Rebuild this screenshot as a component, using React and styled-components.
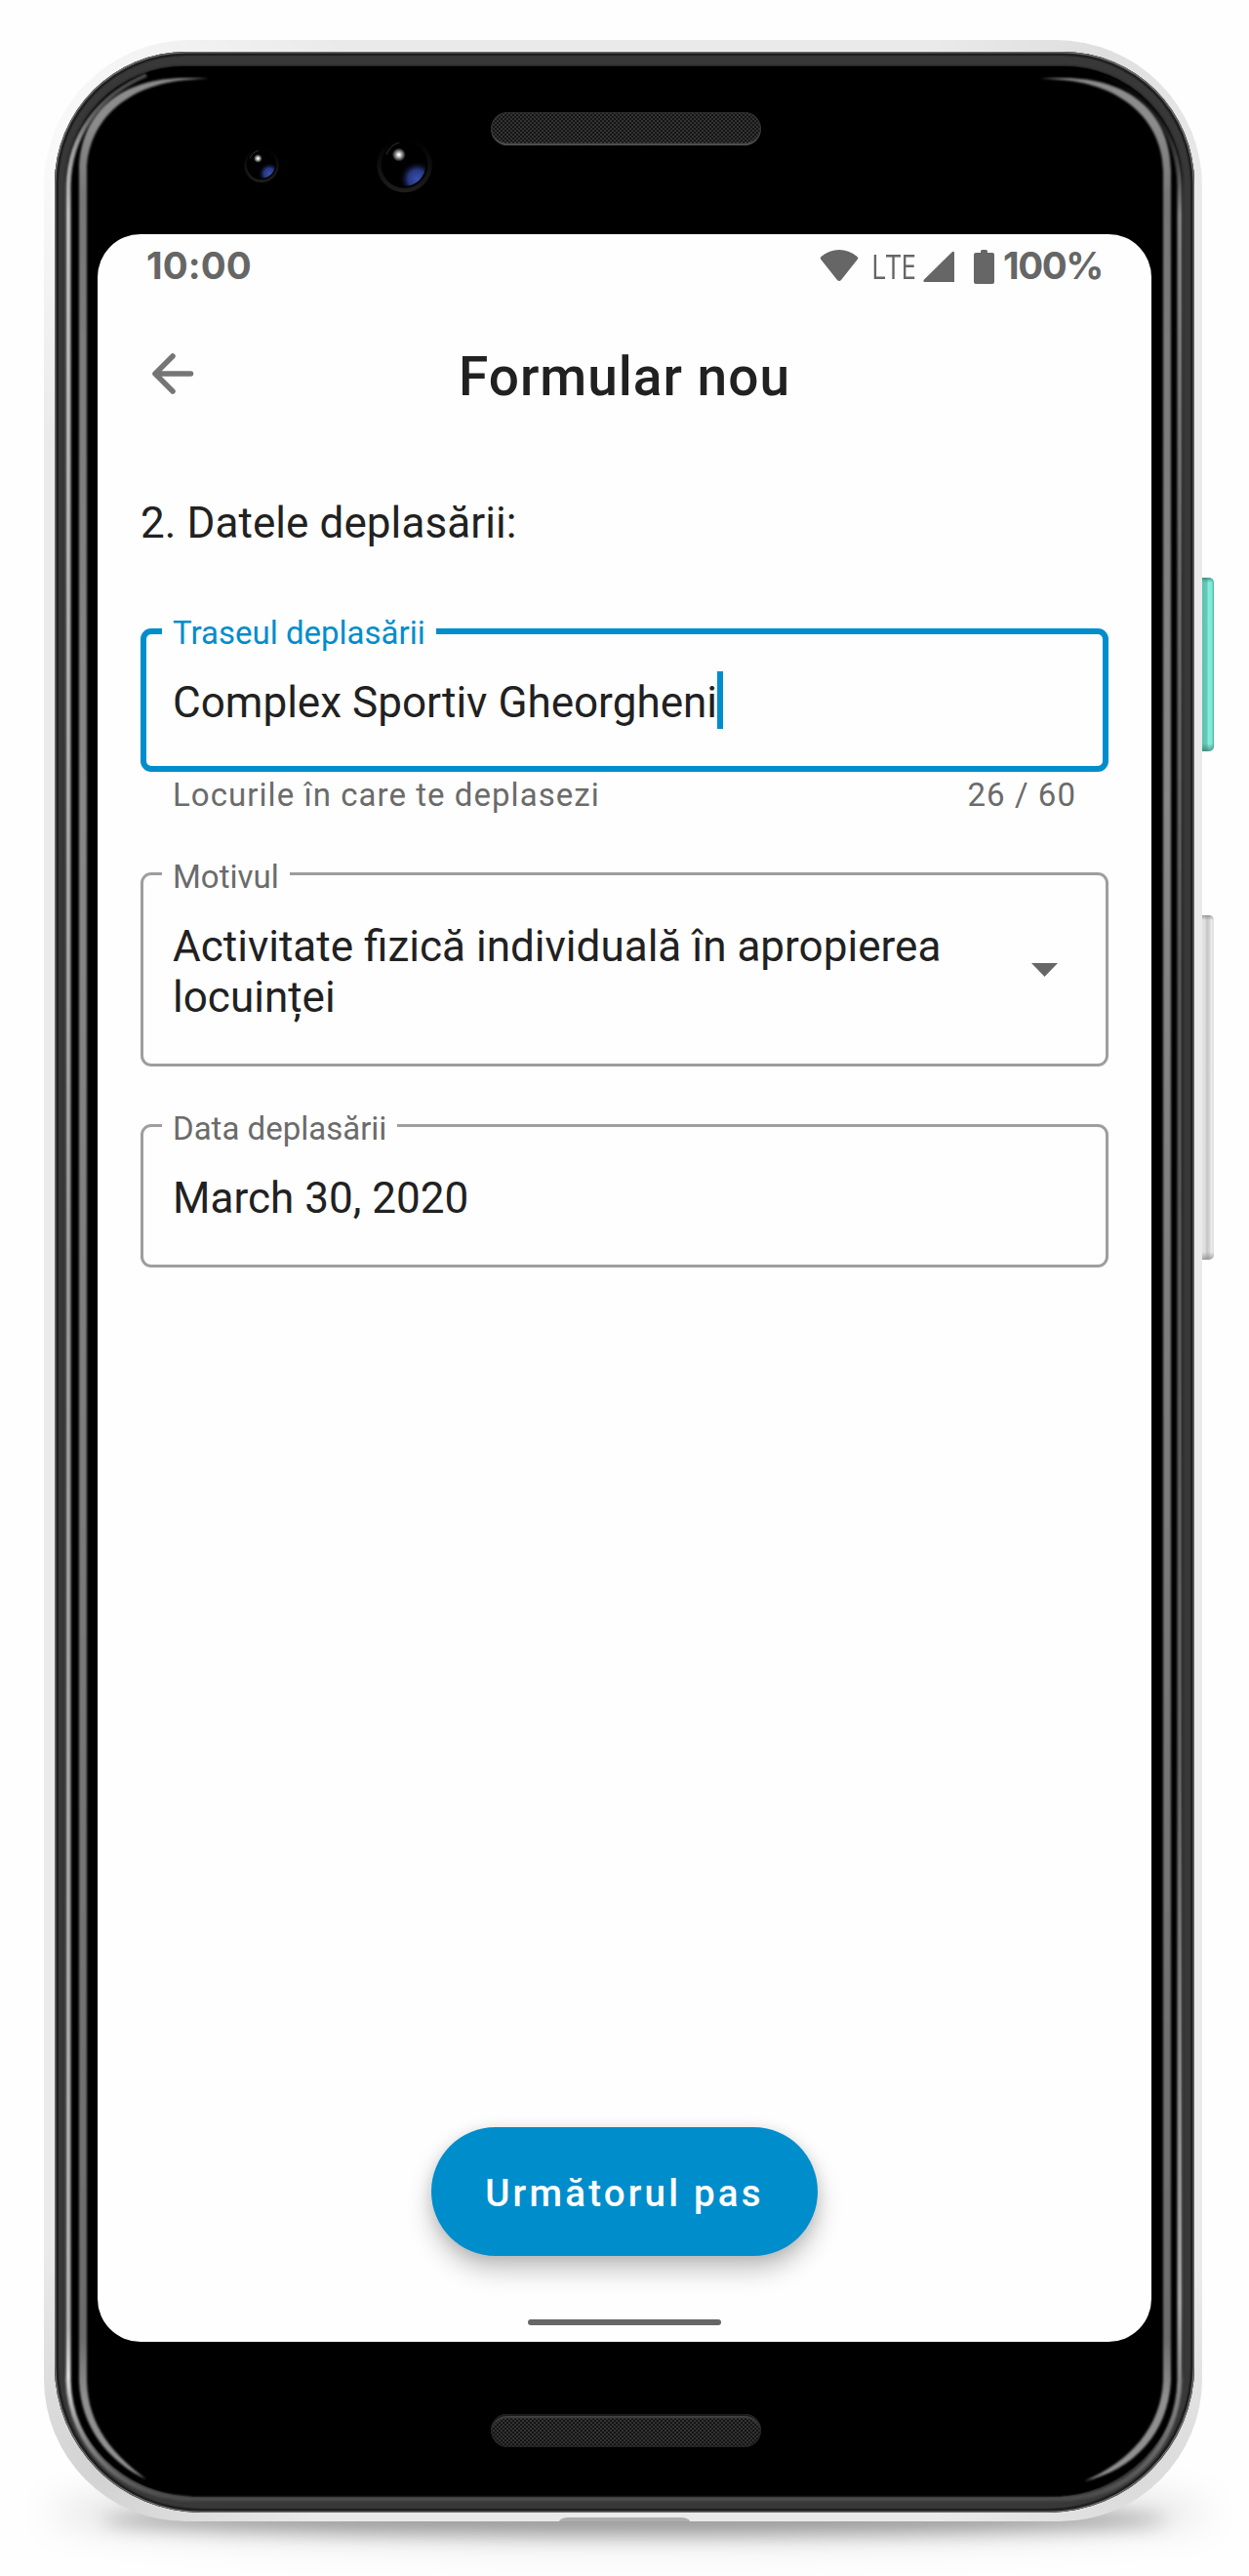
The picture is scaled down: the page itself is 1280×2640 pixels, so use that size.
import React from "react";
import styled, { createGlobalStyle } from "styled-components";

const GlobalStyle = createGlobalStyle`
  *, *::before, *::after { box-sizing: border-box; }
  body { margin: 0; background: #fefefe; }
`;

const Stage = styled.main`
  position: relative;
  width: 1280px;
  height: 2640px;
  padding: 41px 0 0 45px;
  overflow: hidden;
  background: #fefefe;
  font-family: Roboto, "Liberation Sans", sans-serif;
  color: #212121;
`;

const GroundShadow = styled.div`
  position: absolute;
  left: ${(p) => p.$left}px;
  top: ${(p) => p.$top}px;
  width: ${(p) => p.$width}px;
  height: ${(p) => p.$height}px;
  border-radius: 50%;
  background: rgba(0, 0, 0, ${(p) => p.$alpha});
  filter: blur(${(p) => p.$blur}px);
`;

const SideKey = styled.div`
  position: absolute;
  left: 1230px;
  top: ${(p) => p.$top}px;
  width: 14px;
  height: ${(p) => p.$height}px;
  border-radius: 0 5px 5px 0;
  background:
    linear-gradient(${(p) => p.$edge} 0, transparent 5px, transparent calc(100% - 8px), ${(p) => p.$edge} 100%),
    ${(p) => p.$fill};
`;

const Shell = styled.div`
  position: relative;
  width: 1187px;
  height: 2543px;
  padding: 12px 8px 8px 11px;
  border-radius: 150px 150px 146px 146px;
  background:
    radial-gradient(circle at 60px 2490px, #d2d2d2 0, rgba(220, 220, 220, 0) 230px),
    radial-gradient(circle at 1120px 2490px, #dadada 0, rgba(225, 225, 225, 0) 210px),
    radial-gradient(circle at 1080px 30px, #dedede 0, rgba(225, 225, 225, 0) 170px),
    radial-gradient(circle at 30px 120px, #fafafa 0, rgba(250, 250, 250, 0) 300px),
    #eaeaea;
`;

const Rim = styled.div`
  width: 1168px;
  height: 2522px;
  padding: 15px 12px 16px 11px;
  border-radius: 135px 135px 150px 150px;
  background: #383838;
  box-shadow: inset 0 0 0 1.5px #6c6c6c, inset 0 0 1px 4px #1e1e1e;
`;

const Bezel = styled.div`
  display: flex;
  flex-direction: column;
  width: 1145px;
  height: 2491px;
  padding: 0 32px 0 33px;
  border-radius: 122px 122px 136px 136px;
  background: #000;
  box-shadow: 0 0 3px #000;
`;

const Band = styled.div`
  display: flex;
  justify-content: center;
  flex: none;
  height: ${(p) => p.$height}px;
  padding-top: ${(p) => p.$inset}px;
`;

const Speaker = styled.div`
  width: 277px;
  height: 34px;
  margin-left: 3px;
  border-radius: 17px;
  background:
    conic-gradient(#333 25%, #141414 0 50%, #333 0 75%, #141414 0) 0 0 / 4px 4px;
  box-shadow: ${(p) =>
    p.$bottom
      ? "inset 0 2px 0 #1c1c1c, inset 0 5px 2px -1px #444, inset 0 0 2px 1px #222"
      : "inset 0 -3px 2px -1px #555, inset 0 0 2px 1px #333"};
`;

const Screen = styled.section`
  display: flex;
  flex-direction: column;
  flex: none;
  width: 1080px;
  height: 2160px;
  border-radius: 44px;
  background: #fefefe;
`;

const StatusBar = styled.header`
  display: flex;
  align-items: center;
  height: 66px;
  padding: 0 50px 0 50px;
  color: #666;
`;

const StatusText = styled.span`
  margin-top: -3px;
  font: 700 38.5px/66px Inter, Roboto, sans-serif;
  letter-spacing: ${(p) => p.$tracking}px;
`;

const StatusIcons = styled.div`
  display: flex;
  align-items: center;
  margin-left: auto;
`;

const Glyph = styled.svg`
  display: block;
  flex: none;
  fill: #666;
  margin-top: ${(p) => p.$drop || 0}px;
  margin-right: ${(p) => p.$gap}px;
`;

const Network = styled.span`
  width: 47px;
  margin-right: 6px;
  font: 400 34px/66px "Open Sans", Roboto, sans-serif;
  transform: scaleX(0.83);
  transform-origin: left center;
  white-space: nowrap;
`;

const AppBar = styled.div`
  display: grid;
  grid-template-columns: 66px 1fr 66px;
  align-items: center;
  height: 154px;
  padding: 0 44px;
`;

const BackButton = styled.button`
  display: flex;
  align-items: center;
  justify-content: center;
  width: 66px;
  height: 66px;
  padding: 0;
  border: 0;
  background: none;
`;

const Title = styled.h1`
  margin: 0;
  padding-top: 6px;
  font-size: 55px;
  font-weight: 500;
  line-height: 66px;
  letter-spacing: 1px;
  text-align: center;
`;

const Form = styled.form`
  display: flex;
  flex-direction: column;
  padding: 0 44px;
`;

const Heading = styled.h2`
  margin: 50px 0 0;
  font-size: 44px;
  font-weight: 400;
  line-height: 52px;
  letter-spacing: 0.08px;
`;

const Field = styled.fieldset`
  min-width: 0;
  height: ${(p) => p.$height}px;
  margin: ${(p) => p.$gap}px 0 0;
  padding: ${(p) => (p.$active ? 44 : 47)}px 49px 0 ${(p) => (p.$active ? 27 : 30)}px;
  border: ${(p) => (p.$active ? "6px solid #008dcc" : "3px solid #9e9e9e")};
  border-radius: 11px;
`;

const Label = styled.legend`
  height: ${(p) => (p.$active ? 6 : 3)}px;
  margin-left: -11px;
  padding: 0 11px;
  font-size: 33px;
  line-height: 10px;
  color: ${(p) => (p.$active ? "#008dcc" : "#6b6b6b")};
`;

const Value = styled.div`
  display: flex;
  align-items: center;
  height: ${(p) => p.$lines * 52}px;
  font-size: 44.06px;
  line-height: 52px;
  white-space: pre-line;
`;

const Caret = styled.span`
  width: 6px;
  height: 59px;
  margin-top: -5px;
  background: #008dcc;
`;

const DropIcon = styled.svg`
  display: block;
  margin-left: auto;
  margin-top: -4px;
  fill: #666;
`;

const Hints = styled.div`
  display: flex;
  justify-content: space-between;
  height: 40px;
  padding: 4px 33px 0 33px;
  font-size: 33px;
  line-height: 40px;
  letter-spacing: 1.05px;
  color: #6b6b6b;
`;

const Footer = styled.footer`
  display: flex;
  flex-direction: column;
  align-items: center;
  margin-top: auto;
  padding-bottom: 17px;
`;

const NextButton = styled.button`
  width: 396px;
  height: 132px;
  padding: 4px 0 0;
  border: 0;
  border-radius: 66px;
  background: #008dcc;
  color: #fff;
  font: 500 38.5px/52px Roboto, sans-serif;
  letter-spacing: 3.2px;
  box-shadow: 0 14px 26px rgba(0, 0, 0, 0.24), 0 2px 14px rgba(0, 0, 0, 0.1);
`;

const HomeBar = styled.div`
  width: 198px;
  height: 6px;
  margin-top: 65px;
  border-radius: 3px;
  background: #666;
`;

const Reflections = styled.svg`
  position: absolute;
  left: 0;
  top: 0;
  pointer-events: none;
`;

const PortLip = styled.div`
  position: absolute;
  left: 573px;
  top: 2580px;
  width: 134px;
  height: 4px;
  border-radius: 10px 10px 0 0 / 4px 4px 0 0;
  background: #adadad;
`;

function Camera({ id, x, y, r }) {
  return (
    <g>
      <clipPath id={id}>
        <circle cx={x} cy={y} r={r * 0.84} />
      </clipPath>
      <circle cx={x} cy={y} r={r} fill="#000" stroke="url(#ring)" strokeWidth={r * 0.17} />
      <g clipPath={`url(#${id})`}>
        <circle cx={x + r * 0.5} cy={y + r * 0.55} r={r * 0.72} fill="url(#blue)" />
      </g>
      <circle cx={x - r * 0.22} cy={y - r * 0.4} r={r * 0.27} fill="url(#spark)" />
      <path
        d={`M${x - r * 0.72} ${y - r * 0.4} Q${x - r * 0.55} ${y - r * 0.8} ${x - r * 0.2} ${y - r * 0.88}`}
        fill="none"
        stroke="#333"
        strokeWidth="1"
      />
    </g>
  );
}

function DeviceReflections() {
  return (
    <Reflections width="1280" height="2640" viewBox="0 0 1280 2640" aria-hidden="true">
      <defs>
        <filter id="soft" x="0" y="0" width="1280" height="2640" filterUnits="userSpaceOnUse">
          <feGaussianBlur stdDeviation="1.2" />
        </filter>
        <linearGradient id="outerL" x1="0" y1="70" x2="0" y2="2560" gradientUnits="userSpaceOnUse">
          <stop offset="0" stopColor="#383838" stopOpacity="0" />
          <stop offset="0.03" stopColor="#999" />
          <stop offset="0.06" stopColor="#c4c4c4" />
          <stop offset="0.5" stopColor="#a0a0a0" />
          <stop offset="0.93" stopColor="#b8b8b8" />
          <stop offset="0.95" stopColor="#e4e4e4" />
          <stop offset="0.97" stopColor="#999" />
          <stop offset="1" stopColor="#4c4c4c" />
        </linearGradient>
        <linearGradient id="outerR" x1="0" y1="70" x2="0" y2="2560" gradientUnits="userSpaceOnUse">
          <stop offset="0" stopColor="#333" stopOpacity="0" />
          <stop offset="0.06" stopColor="#888" />
          <stop offset="0.2" stopColor="#6c6c6c" />
          <stop offset="0.4" stopColor="#565656" />
          <stop offset="0.7" stopColor="#666" />
          <stop offset="0.92" stopColor="#aaa" />
          <stop offset="0.97" stopColor="#777" />
          <stop offset="1" stopColor="#4c4c4c" />
        </linearGradient>
        <linearGradient id="inner" x1="0" y1="78" x2="0" y2="2545" gradientUnits="userSpaceOnUse">
          <stop offset="0" stopColor="#8c8c8c" />
          <stop offset="0.02" stopColor="#8c8c8c" />
          <stop offset="0.05" stopColor="#777" />
          <stop offset="0.3" stopColor="#888" />
          <stop offset="0.94" stopColor="#6c6c6c" />
          <stop offset="0.965" stopColor="#909090" />
        </linearGradient>
        <radialGradient id="blue">
          <stop offset="0" stopColor="#3a4fae" />
          <stop offset="0.5" stopColor="#26377f" />
          <stop offset="1" stopColor="#000" stopOpacity="0" />
        </radialGradient>
        <radialGradient id="spark">
          <stop offset="0.1" stopColor="#fff" />
          <stop offset="1" stopColor="#fff" stopOpacity="0" />
        </radialGradient>
        <linearGradient id="ring" x1="0" y1="0" x2="0" y2="1">
          <stop offset="0" stopColor="#000" />
          <stop offset="1" stopColor="#1e1b1d" />
        </linearGradient>
      </defs>
      <g fill="none" filter="url(#soft)">
        <path d="M150 77 C100 98 71 140 70 190 V2440 C72 2505 122 2559 195 2561 H1088 C1160 2559 1207 2505 1209 2440" stroke="#4e4e4e" strokeWidth="4" />
        <path d="M150 77 C100 98 71 140 70 190 V2440 C72 2505 122 2559 195 2561" stroke="url(#outerL)" strokeWidth="5" />
        <path d="M1130 77 C1180 98 1208 140 1209 190 V2440 C1207 2505 1160 2559 1088 2561" stroke="url(#outerR)" strokeWidth="5" />
      </g>
      <g fill="url(#inner)" filter="url(#soft)">
        <path d="M214 80 H190 C124 80 82 114 81 175 V2440 C83 2487 110 2522 150 2541 C117 2516 90 2487 89 2440 V175 C90 122 132 87 190 82Z" />
        <path d="M1066 80 H1090 C1156 80 1199 114 1200 175 V2440 C1197 2494 1162 2531 1111 2543 C1158 2523 1190 2487 1192 2440 V175 C1191 122 1148 87 1090 82Z" />
      </g>
      <Camera id="lensSmall" x={268} y={169} r={16.5} />
      <Camera id="lensLarge" x={414.5} y={169} r={26} />
    </Reflections>
  );
}

const green = "linear-gradient(90deg, #5dbfae 0, #66c8b6 50%, #84f0dc 58%, #7ee9d5 85%, #4fae9c 100%)";
const grey = "linear-gradient(90deg, #e4e4e4 0, #dedede 35%, #c6c4c4 50%, #d6d4d4 68%, #ecebeb 80%, #e0e0e0 100%)";

export default function App() {
  return (
    <Stage>
      <GlobalStyle />
      <GroundShadow $left={50} $top={2545} $width={1190} $height={60} $blur={18} $alpha={0.13} />
      <GroundShadow $left={105} $top={2568} $width={1090} $height={30} $blur={9} $alpha={0.3} />
      <SideKey $top={592} $height={178} $fill={green} $edge="rgba(50, 120, 105, 0.7)" />
      <SideKey $top={938} $height={353} $fill={grey} $edge="rgba(120, 115, 115, 0.6)" />
      <Shell>
        <Rim>
          <Bezel>
            <Band $height={172} $inset={47}>
              <Speaker />
            </Band>
            <Screen>
              <StatusBar>
                <StatusText $tracking={0.1}>10:00</StatusText>
                <StatusIcons>
                  <Glyph width="40" height="34" viewBox="0 0 40 34" $gap={13} $drop={-2}>
                    <path d="M20 33 Q19 33 18 32 L1 10.5 Q0 9 1.5 8 Q10 1 20 1 Q30 1 38.500 8 Q40 9 39 10.500 L22 32 Q21 33 20 33Z" />
                  </Glyph>
                  <Network>LTE</Network>
                  <Glyph width="32" height="33" viewBox="0 0 32 33" $gap={20} $drop={1}>
                    <path d="M30 1 Q32 0 32 2 V32 H1.500 Q-0.500 31.500 1 29.500Z" />
                  </Glyph>
                  <Glyph width="21" height="35" viewBox="0 0 21 35" $gap={9}>
                    <path d="M7 3 V1.500 Q7 0 8.500 0 H12.500 Q14 0 14 1.500 V3 H19 Q21 3 21 5 V33 Q21 35 19 35 H2 Q0 35 0 33 V5 Q0 3 2 3Z" />
                  </Glyph>
                  <StatusText $tracking={-1.4}>100%</StatusText>
                </StatusIcons>
              </StatusBar>
              <AppBar>
                <BackButton type="button" aria-label="Înapoi">
                  <svg width="44" height="44" viewBox="0 0 44 44" fill="none" stroke="#757575" strokeWidth="5.500" strokeLinecap="round" strokeLinejoin="round">
                    <path d="M40.500 22 H4 M22 4 L4 22 L22 40" />
                  </svg>
                </BackButton>
                <Title>Formular nou</Title>
              </AppBar>
              <Form>
                <Heading>2. Datele deplasării:</Heading>
                <Field $active $height={147} $gap={82}>
                  <Label $active>Traseul deplasării</Label>
                  <Value $lines={1}>
                    Complex Sportiv Gheorgheni
                    <Caret />
                  </Value>
                </Field>
                <Hints>
                  <span>Locurile în care te deplasezi</span>
                  <span>26 / 60</span>
                </Hints>
                <Field $height={199} $gap={63}>
                  <Label>Motivul</Label>
                  <Value $lines={2}>
                    {"Activitate fizică individuală în apropierea\nlocuinței"}
                    <DropIcon width="27" height="14" viewBox="0 0 27 14">
                      <path d="M0 0H27L13.500 14Z" />
                    </DropIcon>
                  </Value>
                </Field>
                <Field $height={147} $gap={59}>
                  <Label>Data deplasării</Label>
                  <Value $lines={1}>March 30, 2020</Value>
                </Field>
              </Form>
              <Footer>
                <NextButton type="button">Următorul pas</NextButton>
                <HomeBar />
              </Footer>
            </Screen>
            <Band $height={159} $inset={74}>
              <Speaker $bottom />
            </Band>
          </Bezel>
        </Rim>
      </Shell>
      <PortLip />
      <DeviceReflections />
    </Stage>
  );
}
